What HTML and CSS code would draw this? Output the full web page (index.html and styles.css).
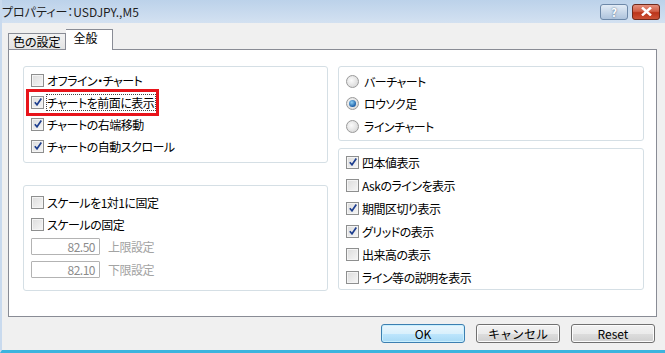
FILE: index.html
```html
<!DOCTYPE html>
<html lang="ja">
<head>
  <meta charset="UTF-8">
  <title>プロパティー：USDJPY.,M5</title>
  <link rel="stylesheet" href="styles.css">
</head>
<body>
  <div class="window">
    <div class="titlebar">
      <span class="title">プロパティー：USDJPY.,M5</span>
      <div class="title-buttons">
        <span class="tbtn help">?</span>
        <span class="tbtn close">
          <svg width="11" height="9" viewBox="0 0 11 9"><path d="M1 0.5 L10 8.5 M10 0.5 L1 8.5" stroke="#ffffff" stroke-width="2.4"/></svg>
        </span>
      </div>
    </div>

    <div class="content">
      <div class="tabs">
        <span class="tab">色の設定</span>
        <span class="tab active">全般</span>
      </div>

      <div class="panel">
        <div class="column">
          <div class="group group-chart">
            <div class="row"><span class="check"></span>オフライン・チャート</div>
            <div class="row"><span class="marked"><span class="check on"></span><span class="focus">チャートを前面に表示</span></span></div>
            <div class="row"><span class="check on"></span>チャートの右端移動</div>
            <div class="row"><span class="check on"></span>チャートの自動スクロール</div>
          </div>
          <div class="group group-scale">
            <div class="row"><span class="check"></span>スケールを1対1に固定</div>
            <div class="row"><span class="check"></span>スケールの固定</div>
            <div class="field"><span class="input">82.50</span><span class="muted">上限設定</span></div>
            <div class="field"><span class="input">82.10</span><span class="muted">下限設定</span></div>
          </div>
        </div>

        <div class="column">
          <div class="group group-type">
            <div class="row"><span class="radio"></span>バーチャート</div>
            <div class="row"><span class="radio on"></span>ロウソク足</div>
            <div class="row"><span class="radio"></span>ラインチャート</div>
          </div>
          <div class="group group-show">
            <div class="row"><span class="check on"></span>四本値表示</div>
            <div class="row"><span class="check"></span>Askのラインを表示</div>
            <div class="row"><span class="check on"></span>期間区切り表示</div>
            <div class="row"><span class="check on"></span>グリッドの表示</div>
            <div class="row"><span class="check"></span>出来高の表示</div>
            <div class="row"><span class="check"></span>ライン等の説明を表示</div>
          </div>
        </div>
      </div>

      <div class="buttons">
        <button class="default">OK</button>
        <button>キャンセル</button>
        <button>Reset</button>
      </div>
    </div>
  </div>
</body>
</html>
```

FILE: styles.css
```css
body {
  margin: 0;
  font-family: "Noto Sans CJK JP", "Noto Sans", sans-serif;
  font-size: 12px;
  font-feature-settings: "palt";
  color: #000;
  background: #f0f0f0;
}
.window {
  width: 665px;
  height: 353px;
  box-sizing: border-box;
  background: #f0f0f0;
  border-left: 2px solid #c9daee;
  border-bottom: 3px solid #3cb4de;
  overflow: hidden;
}
.titlebar {
  height: 23px;
  display: flex;
  align-items: center;
  justify-content: space-between;
  background: linear-gradient(#bcd2ea, #d3e1f1);
  margin-left: -2px;
}
.title {
  padding-left: 2px;
  font-size: 12px;
  color: #1e1e1e;
}
.title-buttons {
  display: flex;
  gap: 4px;
  padding-right: 5px;
}
.tbtn {
  width: 26px;
  height: 14px;
  border: 1px solid #6d88a8;
  border-radius: 3px;
  display: flex;
  align-items: center;
  justify-content: center;
  font-size: 11px;
  font-weight: bold;
}
.help {
  background-color: #c8d8ea;
  background-image: linear-gradient(#e3ecf6, #aec3dc);
  color: #ffffff;
  text-shadow: 0 0 2px #3c5878;
}
.close {
  background-color: #c9503a;
  background-image: linear-gradient(#e58f7b 0%, #d15f47 45%, #bb3419 55%, #cc5236 100%);
  border-color: #6e2a1c;
}
.content {
  padding: 5px 8px 0 6px;
}
.tabs {
  display: flex;
  align-items: flex-end;
  height: 21px;
  position: relative;
  z-index: 1;
}
.tab {
  height: 15px;
  line-height: 15px;
  padding: 0 4px 0 4px;
  border: 1px solid #898c95;
  border-bottom: none;
  background: linear-gradient(#f2f2f2, #e3e3e3);
}
.tab.active {
  height: 20px;
  line-height: 16px;
  padding: 0 14px 0 8px;
  background: #fff;
  border-left: none;
  margin-bottom: -1px;
}
.panel {
  height: 268px;
  box-sizing: border-box;
  background: #fff;
  border: 1px solid #898c95;
  padding: 16px 12px 0 14px;
  display: grid;
  grid-template-columns: 305px 306px;
  gap: 10px;
  letter-spacing: -0.5px;
}
.column {
  display: flex;
  flex-direction: column;
}
.group {
  border: 1px solid #d5dfe5;
  border-radius: 3px;
  box-sizing: border-box;
  padding: 2px 0 0 7px;
}
.group-chart { height: 97px; }
.group-scale { height: 106px; margin-top: 22px; padding-top: 5px; }
.group-type { height: 75px; padding-top: 3px; }
.group-show { height: 142px; margin-top: 7px; padding-top: 2px; }
.row {
  height: 22px;
  display: flex;
  align-items: center;
}
.group-show .row { height: 23px; }
.group-type .row { height: 22.5px; }
.check {
  width: 11px;
  height: 11px;
  border: 1px solid #8e8f8f;
  background: linear-gradient(135deg, #dcdcdc, #f6f6f6);
  box-shadow: inset 0 0 0 1px #f4f4f4;
  margin-right: 3px;
  flex-shrink: 0;
  position: relative;
}
.check.on::after {
  content: "";
  position: absolute;
  left: 2px;
  top: 1px;
  width: 8px;
  height: 8px;
  background: no-repeat center/8px 8px url("data:image/svg+xml,%3Csvg xmlns='http://www.w3.org/2000/svg' viewBox='0 0 8 8'%3E%3Cpath d='M0.8 4.2 L3 6.8 L7.3 0.6' fill='none' stroke='%231e3f8f' stroke-width='1.7'/%3E%3C/svg%3E");
}
.radio {
  width: 11px;
  height: 11px;
  border-radius: 50%;
  border: 1px solid #9a9a9a;
  background: radial-gradient(circle at 40% 40%, #fbfbfb, #d0d0d0);
  margin-right: 5px;
  flex-shrink: 0;
  position: relative;
}
.radio.on::after {
  content: "";
  position: absolute;
  left: 2px;
  top: 2px;
  width: 7px;
  height: 7px;
  border-radius: 50%;
  background: radial-gradient(circle at 40% 35%, #8fd0f5, #1b5fa8 70%, #0d3e7a);
}
.marked {
  display: flex;
  align-items: center;
  padding: 2px 0 2px 1px;
  margin-left: -1px;
  outline: 3px solid #e8141b;
  outline-offset: 1px;
}
.focus {
  outline: 1px dotted #444;
  line-height: 15px;
  padding-right: 1px;
}
.field {
  display: flex;
  align-items: center;
  height: 23px;
}
.input {
  width: 63px;
  height: 15px;
  border: 1px solid #b3b3b3;
  border-radius: 1px;
  text-align: right;
  color: #8c8c8c;
  line-height: 15px;
  padding-right: 4px;
  margin-right: 8px;
}
.muted {
  color: #a3a3a3;
}
.buttons {
  display: flex;
  justify-content: flex-end;
  gap: 11px;
  padding-top: 7px;
  padding-right: 2px;
}
button {
  width: 84px;
  height: 19px;
  padding: 0;
  font-family: inherit;
  font-size: 12px;
  color: #000;
  border: 1px solid #707070;
  border-radius: 3px;
  background: linear-gradient(#f2f2f2 0%, #ebebeb 50%, #dddddd 51%, #cfcfcf 100%);
  box-shadow: inset 0 0 0 1px #fcfcfc;
}
button.default {
  border-color: #3c7fb1;
  background: linear-gradient(#eaf6fd 0%, #d9f0fc 50%, #bee6fd 51%, #a7d9f5 100%);
  box-shadow: inset 0 0 0 1px #c9f0fe;
}
```
